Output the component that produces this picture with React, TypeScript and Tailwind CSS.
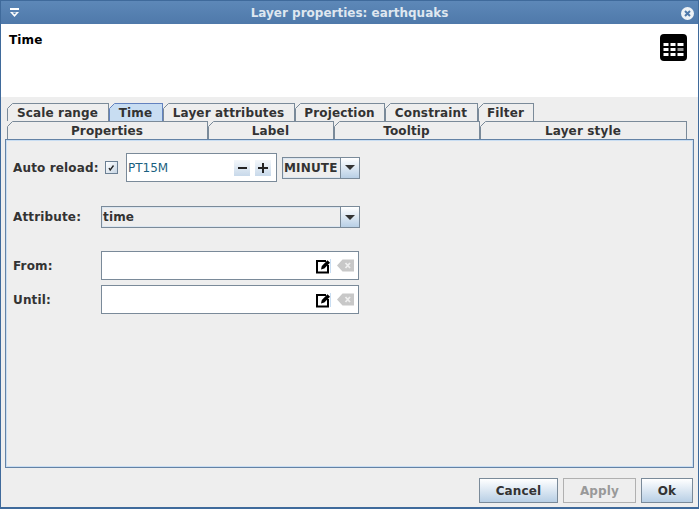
const topTabs = [
  { label: "Scale range", w: "w-[102px]" },
  { label: "Time", w: "w-[54px]", active: true },
  { label: "Layer attributes", w: "w-[132px]" },
  { label: "Projection", w: "w-[90px]" },
  { label: "Constraint", w: "w-[93px]" },
  { label: "Filter", w: "w-[56px]" },
];

const bottomTabs = [
  { label: "Properties", w: "w-[201px]" },
  { label: "Label", w: "w-[126px]" },
  { label: "Tooltip", w: "w-[146px]" },
  { label: "Layer style", w: "w-[207px]" },
];

function Tab({ label, w, active }: { label: string; w: string; active?: boolean }) {
  return (
    <div
      className={`relative flex h-[18px] items-center justify-center border-t border-r border-[#7a8a99] text-[12px] leading-none font-bold tracking-[0.15px] text-[#333333] ${w} ${active ? "bg-[#c8ddf2] border-[#6382bf]" : "bg-[#eeeeee]"}`}
    >
      <span>{label}</span>
      <svg className="absolute top-[-1px] left-0 h-[18px] w-[6px]" viewBox="0 0 6 18">
        <path d="M0 0H6L0 6Z" fill="#eeeeee" />
        <path d="M0.5 18V5.5L5.5 0.5" fill="none" stroke={active ? "#6382bf" : "#7a8a99"} />
      </svg>
    </div>
  );
}

function ArrowButton() {
  return (
    <div className="flex h-full w-[19px] items-center justify-center border-l border-[#7a8a99] bg-gradient-to-b from-[#ffffff] to-[#b8cfe5]">
      <svg width="10" height="5" viewBox="0 0 10 5">
        <path d="M0 0H10L5 5Z" fill="#333333" />
      </svg>
    </div>
  );
}

function DateField() {
  return (
    <div className="flex h-[29px] w-[258px] items-center justify-end border border-[#7a8a99] bg-white pr-[4px]">
      <svg className="mr-[4px]" width="17" height="16" viewBox="0 0 17 16">
        <path d="M10 3H1V14.5H12V7" fill="none" stroke="#000000" strokeWidth="2" />
        <path d="M5 11.5L5.8 8L11.5 2.3L14 4.8L8.3 10.5Z" fill="#000000" />
        <path d="M14.5 1V15" stroke="#c8ddf2" />
      </svg>
      <svg width="17" height="13" viewBox="0 0 17 13">
        <path d="M0 6.5L5.5 0.5H17V12.5H5.5Z" fill="#c8c8c8" />
        <path d="M8.5 4L13 9M13 4L8.5 9" stroke="#eeeeee" strokeWidth="1.8" />
      </svg>
    </div>
  );
}

export default function App() {
  return (
    <div className="flex h-[509px] w-[699px] flex-col overflow-hidden border-x border-b-2 border-[#3f6a9b] bg-[#eeeeee] font-['DejaVu_Sans',sans-serif] text-[12px] tracking-[0.15px] text-[#333333]">
      {/* title bar */}
      <div className="relative flex h-[24px] shrink-0 items-center justify-center border-t border-[#3f6a9b] bg-gradient-to-b from-[#5d88b8] to-[#4f79aa] text-[12px] font-bold tracking-normal text-[#dfe7f0]">
        <svg className="absolute top-[7px] left-[8px]" width="11" height="10" viewBox="0 0 11 10">
          <path d="M1 0H10V2H1Z" fill="#ffffff" />
          <path d="M1 4H10L5.5 9Z" fill="#ffffff" />
          <path d="M3.5 4.5H7.5L5.5 6.5Z" fill="#5580b0" />
        </svg>
        <span>Layer properties: earthquaks</span>
        <svg className="absolute top-[6px] right-[4px]" width="13" height="13" viewBox="0 0 13 13">
          <circle cx="6.5" cy="6.5" r="6.5" fill="#eef2f6" />
          <path d="M4 4L9 9M9 4L4 9" stroke="#4f79aa" strokeWidth="2" />
        </svg>
      </div>

      {/* header */}
      <div className="flex h-[73px] shrink-0 items-start justify-between bg-white pt-[8px] pr-[11px] pl-[8px]">
        <span className="text-[12px] leading-[16px] font-bold text-black">Time</span>
        <svg className="mt-[2px]" width="27" height="27" viewBox="0 0 27 27">
          <rect width="27" height="27" rx="4" fill="#000000" />
          <path d="M3.5 9H8.5V12H3.5ZM10.5 9H15.5V12H10.5ZM17.5 9H23.5V12H17.5ZM3.5 14H8.5V17H3.5ZM10.5 14H15.5V17H10.5ZM3.5 19H8.5V22H3.5ZM10.5 19H15.5V22H10.5ZM17.5 19H23.5V22H17.5Z" fill="#ffffff" />
          <path d="M17.5 14H23.5V17H17.5Z" fill="#9a9a9a" />
        </svg>
      </div>

      {/* tabs */}
      <div className="flex min-h-0 flex-1 flex-col px-[4px] pt-[6px]">
        <div className="flex pl-[2px]">
          {topTabs.map((t) => (
            <Tab key={t.label} {...t} />
          ))}
        </div>
        <div className="flex pl-[2px]">
          {bottomTabs.map((t) => (
            <Tab key={t.label} {...t} />
          ))}
        </div>

        {/* tab panel */}
        <div className="h-[329px] w-[689px] shrink-0 border border-[#6382a5] shadow-[inset_0_0_0_1px_#c8ddf2]">
          <div className="flex flex-col pt-[13px] pl-[7px]">
            <div className="flex items-center">
              <span className="w-[92px] font-bold">Auto reload:</span>
              <div className="flex h-[13px] w-[13px] items-center justify-center border border-[#6b7f93] bg-gradient-to-br from-[#ffffff] to-[#c8d6e4]">
                <svg width="9" height="9" viewBox="0 0 9 9">
                  <path d="M2 5L3.2 7L6.5 2.5" fill="none" stroke="#222222" strokeWidth="1.3" />
                </svg>
              </div>
              <div className="ml-[8px] flex h-[29px] w-[151px] items-center justify-between border border-[#7a8a99] bg-white pr-[5px] pl-[1px] tracking-normal text-[#1a5f80]">
                <span>PT15M</span>
                <div className="flex gap-[5px]">
                  <div className="flex h-[16px] w-[16px] items-center justify-center bg-gradient-to-b from-[#f4f7fa] to-[#c8d9ea]">
                    <div className="h-[2px] w-[9px] bg-[#222222]" />
                  </div>
                  <div className="relative flex h-[16px] w-[16px] items-center justify-center bg-gradient-to-b from-[#f4f7fa] to-[#c8d9ea]">
                    <div className="h-[2px] w-[10px] bg-[#222222]" />
                    <div className="absolute h-[10px] w-[2px] bg-[#222222]" />
                  </div>
                </div>
              </div>
              <div className="ml-[5px] flex h-[22px] w-[78px] items-center border border-[#7a8a99] bg-[#eeeeee] font-bold shadow-[inset_0_0_0_1px_#dbe6f1]">
                <span className="flex-1 pl-[1px]">MINUTE</span>
                <ArrowButton />
              </div>
            </div>

            <div className="mt-[24px] flex items-center">
              <span className="w-[88px] font-bold">Attribute:</span>
              <div className="flex h-[22px] w-[259px] items-center border border-[#7a8a99] bg-[#eeeeee] font-bold shadow-[inset_0_0_0_1px_#dbe6f1]">
                <span className="flex-1 pl-[1px]">time</span>
                <ArrowButton />
              </div>
            </div>

            <div className="mt-[23px] flex items-center">
              <span className="w-[88px] font-bold">From:</span>
              <DateField />
            </div>
            <div className="mt-[5px] flex items-center">
              <span className="w-[88px] font-bold">Until:</span>
              <DateField />
            </div>
          </div>
        </div>

        {/* buttons */}
        <div className="flex justify-end gap-[5px] pt-[10px] pr-[1px]">
          <button className="h-[25px] w-[79px] border border-[#7a8a99] bg-gradient-to-b from-[#ffffff] to-[#b8cfe5] font-bold">Cancel</button>
          <button className="h-[25px] w-[73px] border border-[#b0b0b0] bg-[#eeeeee] font-bold text-[#999999]">Apply</button>
          <button className="h-[25px] w-[52px] border border-[#7a8a99] bg-gradient-to-b from-[#ffffff] to-[#b8cfe5] font-bold">Ok</button>
        </div>
      </div>
    </div>
  );
}
